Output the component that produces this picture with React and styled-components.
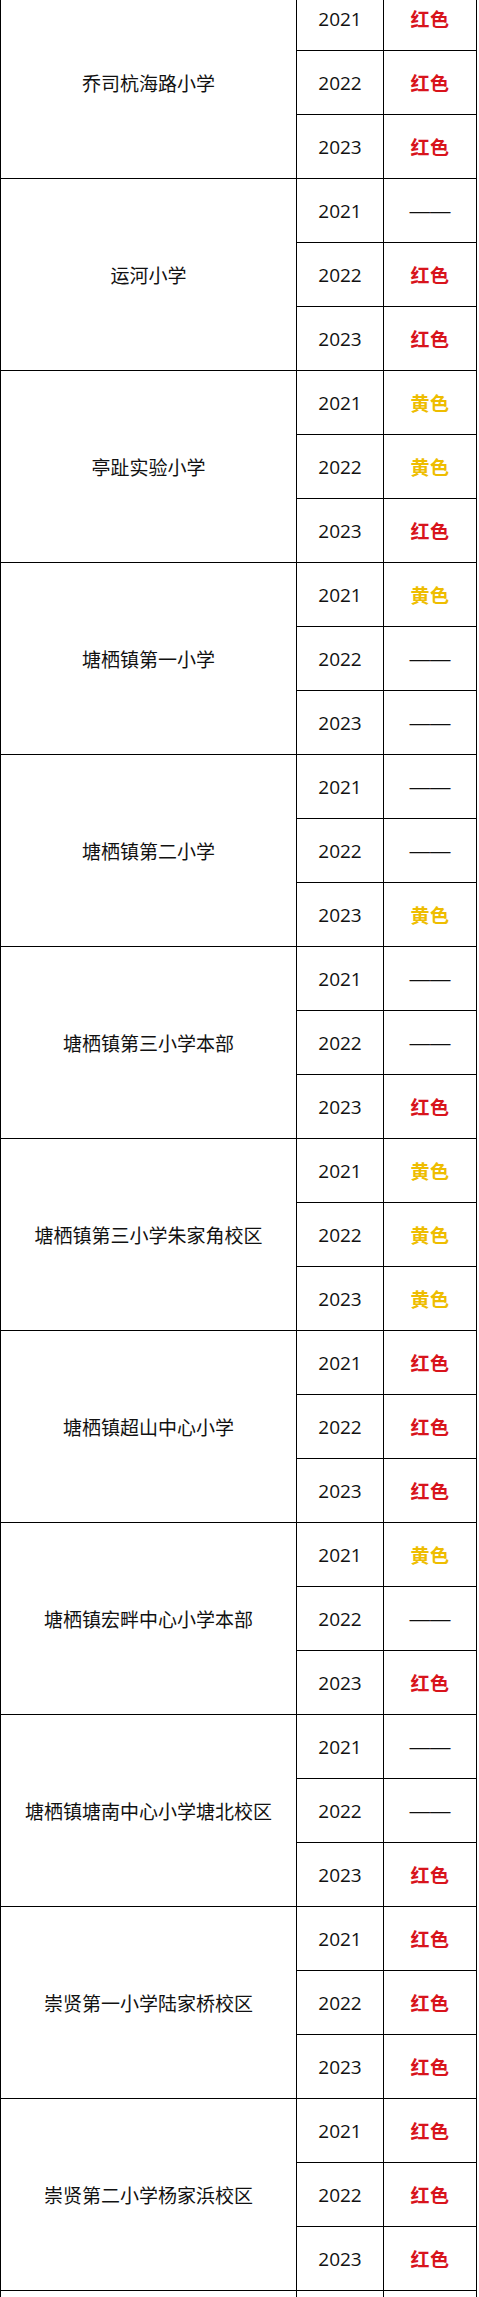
import styled, { createGlobalStyle } from "styled-components"

const GlobalStyle = createGlobalStyle`
  html, body {
    margin: 0;
    padding: 0;
    background: #fff;
  }
  body {
    font-family: "Open Sans", "Noto Sans CJK SC", sans-serif;
    color: #111;
  }
`

const schools = [
    { name: "乔司杭海路小学", marks: ["red", "red", "red"] },
    { name: "运河小学", marks: ["none", "red", "red"] },
    { name: "亭趾实验小学", marks: ["yellow", "yellow", "red"] },
    { name: "塘栖镇第一小学", marks: ["yellow", "none", "none"] },
    { name: "塘栖镇第二小学", marks: ["none", "none", "yellow"] },
    { name: "塘栖镇第三小学本部", marks: ["none", "none", "red"] },
    { name: "塘栖镇第三小学朱家角校区", marks: ["yellow", "yellow", "yellow"] },
    { name: "塘栖镇超山中心小学", marks: ["red", "red", "red"] },
    { name: "塘栖镇宏畔中心小学本部", marks: ["yellow", "none", "red"] },
    { name: "塘栖镇塘南中心小学塘北校区", marks: ["none", "none", "red"] },
    { name: "崇贤第一小学陆家桥校区", marks: ["red", "red", "red"] },
    { name: "崇贤第二小学杨家浜校区", marks: ["red", "red", "red"] },
]

const years = ["2021", "2022", "2023"]

const labels = { red: "红色", yellow: "黄色", none: "——" }

const Grid = styled.div`
    display: grid;
    grid-template-columns: 295px 86px 92px;
    grid-auto-rows: 63px;
    gap: 1px;
    padding: 1px;
    width: max-content;
    background: #000;
    margin-top: -14px;
`

const Cell = styled.div`
    background: #fff;
    display: flex;
    align-items: center;
    justify-content: center;
    font-size: 19px;
    white-space: nowrap;
`

const NameCell = styled(Cell)`
    grid-row: span 3;
    font-family: "Noto Sans CJK SC", sans-serif;
`

const YearCell = styled(Cell)`
    font-family: "Open Sans", sans-serif;
`

const MarkCell = styled(Cell)`
    font-family: ${p => (p.$mark === "none" ? `"Liberation Sans", sans-serif` : `"Noto Sans CJK SC", sans-serif`)};
    font-size: ${p => (p.$mark === "none" ? "20.5px" : "19px")};
    font-weight: ${p => (p.$mark === "none" ? 400 : 700)};
    color: ${p => (p.$mark === "red" ? "#d8141c" : p.$mark === "yellow" ? "#eebd00" : "#111")};
    letter-spacing: ${p => (p.$mark === "none" ? "0" : "0.5px")};
`

const App = () => {
    return (
        <>
            <GlobalStyle />
            <Grid>
                {schools.map(s => (
                    <Group key={s.name} school={s} />
                ))}
                <Cell />
                <Cell />
                <Cell />
            </Grid>
        </>
    )
}

const Group = ({ school }) => (
    <>
        <NameCell>{school.name}</NameCell>
        {years.map((y, i) => (
            <Row key={y} year={y} mark={school.marks[i]} />
        ))}
    </>
)

const Row = ({ year, mark }) => (
    <>
        <YearCell>{year}</YearCell>
        <MarkCell $mark={mark}>{labels[mark]}</MarkCell>
    </>
)

export default App
